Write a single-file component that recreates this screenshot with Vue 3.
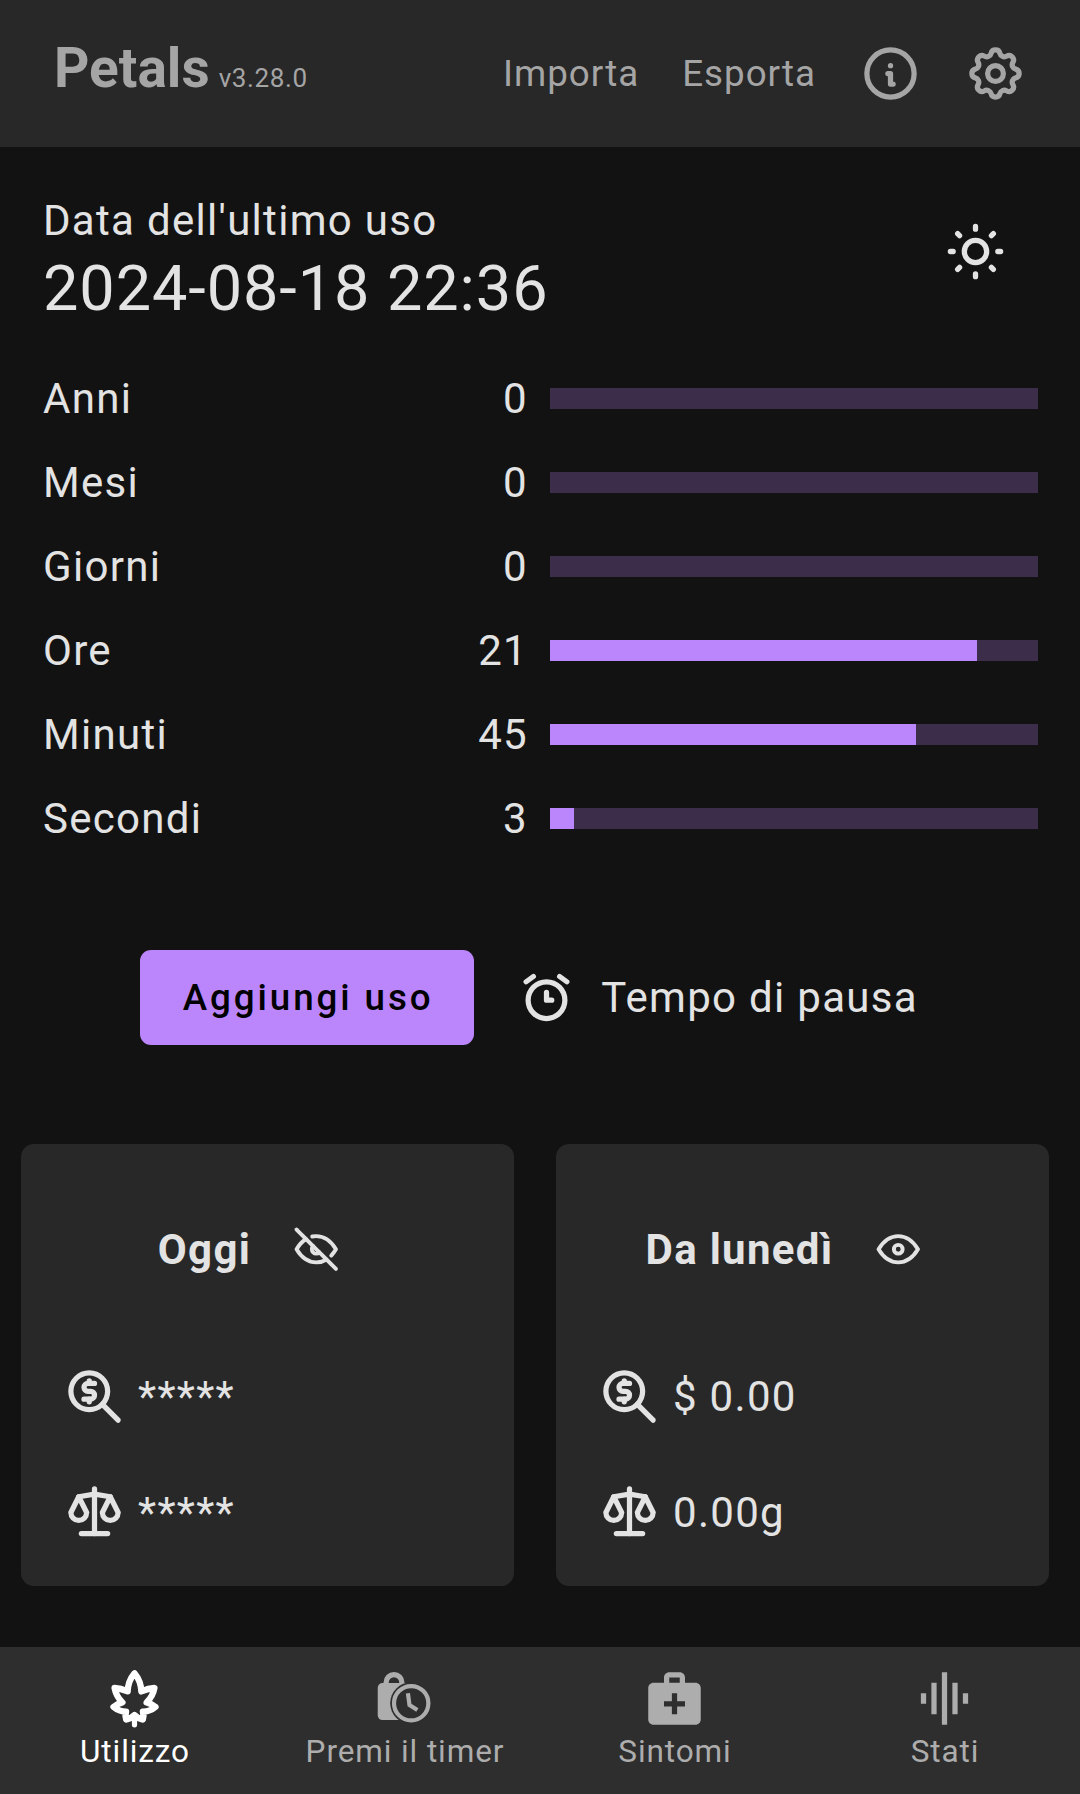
<template>
  <div class="screen">
    <header class="topbar">
      <div class="brand">
        <span class="brand-name">Petals</span>
        <span class="brand-version">v3.28.0</span>
      </div>
      <button class="top-link">Importa</button>
      <button class="top-link top-link--last">Esporta</button>
      <button class="top-icon">
        <svg class="icon" viewBox="0 0 24 24"><path d="M3 12a9 9 0 1 0 18 0a9 9 0 0 0 -18 0" /><path d="M12 9h.01" /><path d="M11 12h1v4h1" /></svg>
      </button>
      <button class="top-icon">
        <svg class="icon" viewBox="0 0 24 24"><path d="M10.325 4.317c.426 -1.756 2.924 -1.756 3.35 0a1.724 1.724 0 0 0 2.573 1.066c1.543 -.94 3.31 .826 2.37 2.37a1.724 1.724 0 0 0 1.065 2.572c1.756 .426 1.756 2.924 0 3.35a1.724 1.724 0 0 0 -1.066 2.573c.94 1.543 -.826 3.31 -2.37 2.37a1.724 1.724 0 0 0 -2.572 1.065c-.426 1.756 -2.924 1.756 -3.35 0a1.724 1.724 0 0 0 -2.573 -1.066c-1.543 .94 -3.31 -.826 -2.37 -2.37a1.724 1.724 0 0 0 -1.065 -2.572c-1.756 -.426 -1.756 -2.924 0 -3.35a1.724 1.724 0 0 0 1.066 -2.573c-.94 -1.543 .826 -3.31 2.37 -2.37c1 .608 2.296 .07 2.572 -1.065" /><path d="M9 12a3 3 0 1 0 6 0a3 3 0 0 0 -6 0" /></svg>
      </button>
    </header>

    <main class="content">
      <section class="last-use">
        <div>
          <p class="last-label">Data dell'ultimo uso</p>
          <p class="last-date">2024-08-18 22:36</p>
        </div>
        <svg class="icon sun" viewBox="0 0 24 24"><path d="M8 12a4 4 0 1 0 8 0a4 4 0 1 0 -8 0" /><path d="M3 12h1m8 -9v1m8 8h1m-9 8v1m-6.4 -15.4l.7 .7m12.1 -.7l-.7 .7m0 11.4l.7 .7m-12.1 -.7l-.7 .7" /></svg>
      </section>

      <section class="timers">
        <div v-for="row in timers" :key="row.label" class="timer">
          <span class="timer-label">{{ row.label }}</span>
          <span class="timer-value">{{ row.value }}</span>
          <div class="track">
            <div class="fill" :style="{ width: (row.value / row.max) * 100 + '%' }"></div>
          </div>
        </div>
      </section>

      <section class="actions">
        <button class="add-btn">Aggiungi uso</button>
        <button class="pause-btn">
          <svg class="icon" viewBox="0 0 24 24"><path d="M5 13a7 7 0 1 0 14 0a7 7 0 0 0 -14 0" /><path d="M12 10l0 3l2 0" /><path d="M7 4l-2.75 2" /><path d="M17 4l2.75 2" /></svg>
          <span>Tempo di pausa</span>
        </button>
      </section>

      <section class="cards">
        <article v-for="card in cards" :key="card.title" class="card">
          <div class="card-head">
            <h3>{{ card.title }}</h3>
            <span class="eye">
              <svg v-if="card.hidden" class="icon" viewBox="0 0 24 24"><path d="M10.585 10.587a2 2 0 0 0 2.829 2.828" /><path d="M16.681 16.673a8.717 8.717 0 0 1 -4.681 1.327c-3.6 0 -6.6 -2 -9 -6c1.272 -2.12 2.712 -3.678 4.32 -4.674m2.86 -1.146a9.055 9.055 0 0 1 1.82 -.18c3.6 0 6.6 2 9 6c-.666 1.11 -1.379 2.067 -2.138 2.87" /><path d="M3 3l18 18" /></svg>
              <svg v-else class="icon" viewBox="0 0 24 24"><path d="M10 12a2 2 0 1 0 4 0a2 2 0 0 0 -4 0" /><path d="M21 12c-2.4 4 -5.4 6 -9 6c-3.6 0 -6.6 -2 -9 -6c2.4 -4 5.4 -6 9 -6c3.6 0 6.6 2 9 6" /></svg>
            </span>
          </div>
          <div class="stat">
            <svg class="icon" viewBox="0 0 24 24"><path d="M3 10a7 7 0 1 0 14 0a7 7 0 1 0 -14 0" /><path d="M21 21l-6 -6" /><path d="M12 7h-2.5a1.5 1.5 0 0 0 0 3h1a1.5 1.5 0 0 1 0 3h-2.5" /><path d="M10 13v1m0 -8v1" /></svg>
            <span>{{ card.cost }}</span>
          </div>
          <div class="stat">
            <svg class="icon" viewBox="0 0 24 24"><path d="M7 20l10 0" /><path d="M6 6l6 -1l6 1" /><path d="M12 3l0 17" /><path d="M9 12l-3 -6l-3 6a3 3 0 0 0 6 0" /><path d="M21 12l-3 -6l-3 6a3 3 0 0 0 6 0" /></svg>
            <span>{{ card.weight }}</span>
          </div>
        </article>
      </section>
    </main>

    <nav class="tabs">
      <div class="tab tab--active">
        <svg class="tab-icon" viewBox="0 0 24 24">
          <path class="line line--leaf" d="M12 2.400C10.500 4.200 9.500 6.400 9.400 9.300C7.800 8.600 6.200 8.100 4.400 8C4.800 10.200 5.800 12 7.400 13.500C6.100 13.800 5 14.400 4 15.200C5.400 16.400 7 17 8.800 17C8.500 18.100 8.500 19.100 8.800 20C9.900 19.900 11 19.300 12 18.300C13 19.300 14.100 19.900 15.200 20C15.500 19.100 15.500 18.100 15.200 17C17 17 18.600 16.400 20 15.200C19 14.400 17.900 13.800 16.600 13.500C18.200 12 19.200 10.200 19.600 8C17.800 8.100 16.200 8.600 14.600 9.300C14.500 6.400 13.500 4.200 12 2.400Z" />
          <path class="line" d="M12 18.300V22" />
        </svg>
        <span>Utilizzo</span>
      </div>
      <div class="tab">
        <svg class="tab-icon" viewBox="0 0 24 24">
          <rect x="1.800" y="6.100" width="12.500" height="14.100" rx="1.800" />
          <path class="line" d="M5 7V5.900a3 3 0 0 1 6 0V7" />
          <circle class="gap" cx="14.550" cy="13.800" r="8" />
          <circle class="line line--thin" cx="14.550" cy="13.800" r="6.550" />
          <path class="line line--thin" d="M13.300 10L13.900 14.500L16.900 16.400" />
        </svg>
        <span>Premi il timer</span>
      </div>
      <div class="tab">
        <svg class="tab-icon" viewBox="0 0 24 24"><path d="M20 6h-4V4c0-1.100-.9-2-2-2h-4c-1.100 0-2 .9-2 2v2H4c-1.100 0-2 .9-2 2v12c0 1.100.9 2 2 2h16c1.100 0 2-.9 2-2V8c0-1.100-.9-2-2-2zM10 4h4v2h-4V4zm6 11h-3v3h-2v-3H8v-2h3v-3h2v3h3v2z" /></svg>
        <span>Sintomi</span>
      </div>
      <div class="tab">
        <svg class="tab-icon" viewBox="0 0 24 24"><path d="M7 18h2V6H7v12zm4 4h2V2h-2v20zm-8-8h2v-4H3v4zm12 4h2V6h-2v12zm4-8v4h2v-4h-2z" /></svg>
        <span>Stati</span>
      </div>
    </nav>
  </div>
</template>

<script setup>
const timers = [
  { label: 'Anni', value: 0, max: 1 },
  { label: 'Mesi', value: 0, max: 12 },
  { label: 'Giorni', value: 0, max: 30 },
  { label: 'Ore', value: 21, max: 24 },
  { label: 'Minuti', value: 45, max: 60 },
  { label: 'Secondi', value: 3, max: 60 }
]

const cards = [
  { title: 'Oggi', hidden: true, cost: '*****', weight: '*****' },
  { title: 'Da lunedì', hidden: false, cost: '$ 0.00', weight: '0.00g' }
]
</script>

<style>
html, body { background: #121212; }
</style>

<style scoped>
.screen {
  width: 1080px;
  height: 1794px;
  display: flex;
  flex-direction: column;
  background: #121212;
  color: #e3e3e3;
  font-family: Roboto, "Noto Sans", sans-serif;
  overflow: hidden;
}
button {
  background: none;
  border: none;
  padding: 0;
  font: inherit;
  color: inherit;
}
p, h3 { margin: 0; }
.icon {
  width: 63px;
  height: 63px;
  fill: none;
  stroke: currentColor;
  stroke-width: 2;
  stroke-linecap: round;
  stroke-linejoin: round;
  flex: none;
}

.topbar {
  height: 147px;
  flex: none;
  display: flex;
  align-items: center;
  padding: 0 53px 0 54px;
  background: #282828;
  color: #a5a5a5;
}
.brand {
  flex: 1;
  display: flex;
  align-items: baseline;
  gap: 9px;
  margin-top: -11px;
}
.brand-name { font-size: 55px; font-weight: 700; }
.brand-version { font-size: 26px; letter-spacing: 0.6px; }
.top-link {
  font-size: 36.75px;
  letter-spacing: 1px;
  margin-right: 43px;
}
.top-link--last { margin-right: 43px; }
.top-icon { display: flex; margin-top: -1px; }
.top-icon + .top-icon { margin-left: 42px; }

.content { flex: 1; display: flex; flex-direction: column; }

.last-use {
  display: flex;
  justify-content: space-between;
  align-items: flex-start;
  padding: 51px 71px 0 43px;
}
.last-label { font-size: 42px; letter-spacing: 1.3px; line-height: 46px; }
.last-date { font-size: 63px; line-height: 74px; letter-spacing: 0.93px; margin-top: 8px; }
.sun { width: 67px; height: 67px; margin-top: 20px; stroke-width: 1.9; }

.timers { margin-top: 30.5px; padding: 0 42px 0 43px; }
.timer {
  height: 84px;
  display: flex;
  align-items: center;
  font-size: 42px;
  letter-spacing: 1.3px;
}
.timer-label { flex: 1; }
.timer-value { margin-right: 22px; }
.track { width: 488px; height: 21px; background: #3c2e4b; }
.fill { height: 100%; background: #bb86fc; }

.actions {
  margin-top: 89.5px;
  display: flex;
  justify-content: center;
  align-items: center;
}
.add-btn {
  width: 334px;
  height: 95px;
  padding-left: 2px;
  border-radius: 11px;
  background: #bb86fc;
  color: #000;
  font-size: 36.75px;
  font-weight: 500;
  letter-spacing: 2.9px;
}
.pause-btn {
  display: flex;
  align-items: center;
  gap: 23px;
  padding: 0 22px 0 41px;
  height: 95px;
  font-size: 42px;
  letter-spacing: 1.3px;
}

.cards {
  margin-top: 99px;
  display: flex;
  justify-content: space-between;
  padding: 0 31px 0 21px;
}
.card {
  width: 493px;
  height: 442px;
  box-sizing: border-box;
  padding: 42px;
  display: flex;
  flex-direction: column;
  gap: 53px;
  background: #282828;
  border-radius: 13px;
}
.card-head {
  height: 126px;
  display: flex;
  justify-content: center;
  align-items: center;
}
.card-head h3 { font-size: 42px; font-weight: 700; letter-spacing: 1.3px; }
.eye { width: 126px; display: flex; justify-content: center; padding-left: 4px; box-sizing: border-box; }
.eye .icon { width: 52.5px; height: 52.5px; stroke-width: 1.8; }
.stat {
  height: 63px;
  display: flex;
  align-items: center;
  gap: 12px;
  font-size: 42px;
  letter-spacing: 1.3px;
}

.tabs {
  flex: none;
  height: 147px;
  display: grid;
  grid-template-columns: repeat(4, 1fr);
  background: #2e2e2e;
  color: #adadad;
}
.tab {
  display: flex;
  flex-direction: column;
  align-items: center;
  padding-top: 20px;
  font-size: 31.5px;
  letter-spacing: 0.9px;
}
.tab span { line-height: 37px; margin-top: 3px; }
.tab-icon { width: 63px; height: 63px; margin-right: 2px; fill: currentColor; }
.tab-icon .line {
  fill: none;
  stroke: currentColor;
  stroke-width: 2;
  stroke-linecap: round;
  stroke-linejoin: round;
}
.tab-icon .line--leaf { stroke-width: 2.4; }
.tab-icon .line--thin { stroke-width: 1.6; stroke-linecap: butt; stroke-linejoin: miter; }
.tab-icon .gap { fill: #2e2e2e; }
.tab--active { color: #fff; }
</style>
